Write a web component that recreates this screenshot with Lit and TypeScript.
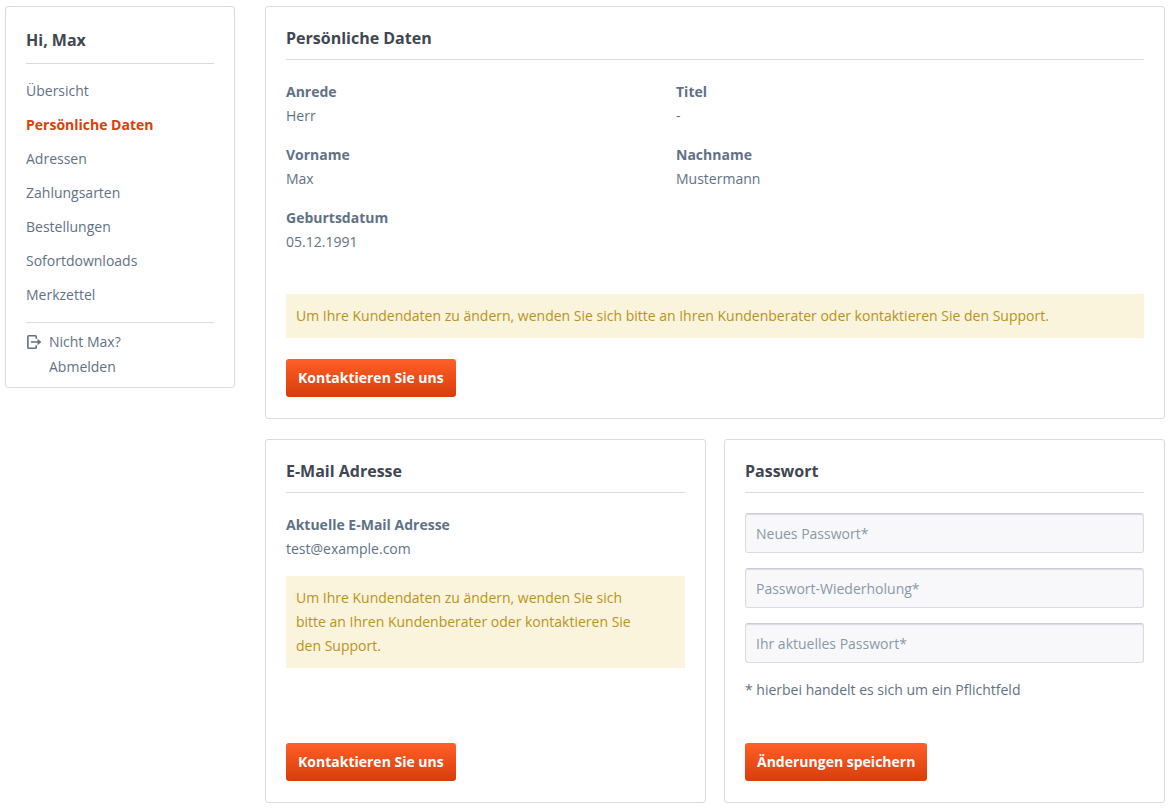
import { LitElement, html, css } from "lit";
import { customElement } from "lit/decorators.js";

interface NavItem {
  label: string;
  active?: boolean;
}

const NAV: NavItem[] = [
  { label: "Übersicht" },
  { label: "Persönliche Daten", active: true },
  { label: "Adressen" },
  { label: "Zahlungsarten" },
  { label: "Bestellungen" },
  { label: "Sofortdownloads" },
  { label: "Merkzettel" },
];

const PERSONAL: [string, string][] = [
  ["Anrede", "Herr"],
  ["Titel", "-"],
  ["Vorname", "Max"],
  ["Nachname", "Mustermann"],
  ["Geburtsdatum", "05.12.1991"],
];

const PASSWORD_FIELDS: [string, string][] = [
  ["new-password", "Neues Passwort*"],
  ["repeat-password", "Passwort-Wiederholung*"],
  ["current-password", "Ihr aktuelles Passwort*"],
];

const NOTICE =
  "Um Ihre Kundendaten zu ändern, wenden Sie sich bitte an Ihren Kundenberater oder kontaktieren Sie den Support.";

@customElement("app-root")
export class AppRoot extends LitElement {
  static styles = css`
    :host {
      display: block;
      font-family: "Open Sans", sans-serif;
      font-size: 14px;
      line-height: 24px;
      color: #5f7285;
      background: #fff;
    }
    *,
    *::before,
    *::after {
      box-sizing: border-box;
    }
    .page {
      display: grid;
      grid-template-columns: 230px minmax(0, 1fr);
      gap: 30px;
      align-items: start;
      padding: 6px 7px 8px 5px;
    }
    .card {
      border: 1px solid #dadae5;
      border-radius: 3px;
      background: #fff;
    }
    .title {
      margin: 0;
      padding-bottom: 9px;
      border-bottom: 1px solid #dadae5;
      font-size: 16px;
      line-height: 24px;
      font-weight: 700;
      color: #3f4752;
    }
    .sidebar {
      padding: 21px 20px 8px;
    }
    .sidebar .title {
      padding-bottom: 11px;
    }
    .nav {
      list-style: none;
      margin: 10px 0;
      padding: 0;
    }
    .link {
      display: block;
      line-height: 34px;
      color: inherit;
      text-decoration: none;
    }
    .active {
      font-weight: 700;
      color: #d9400b;
    }
    .logout {
      display: flex;
      gap: 7px;
      padding-top: 6px;
      border-top: 1px solid #dadae5;
      line-height: 25px;
      color: inherit;
      text-decoration: none;
    }
    .logout-icon {
      flex: none;
      width: 16px;
      height: 25px;
    }
    .logout-text {
      display: flex;
      flex-direction: column;
    }
    .content {
      display: grid;
      gap: 20px;
    }
    .pair {
      display: grid;
      grid-template-columns: repeat(2, minmax(0, 1fr));
      gap: 18px;
    }
    .panel {
      display: flex;
      flex-direction: column;
      padding: 19px 20px 21px;
    }
    .data {
      display: grid;
      grid-template-columns: 5fr 6fr;
      row-gap: 15px;
      margin: 20px 0 0;
    }
    .single {
      grid-template-columns: 1fr;
    }
    .term {
      font-weight: 700;
    }
    .value {
      margin: 0;
    }
    .notice {
      margin: 15px 0 0;
      padding: 10px 40px 10px 10px;
      background: #faf4dc;
      color: #b8931b;
    }
    .notice-wide {
      margin: 40px 0 21px;
    }
    .btn {
      align-self: flex-start;
      height: 38px;
      padding: 0 12px;
      border: 0;
      border-radius: 3px;
      background: linear-gradient(#ff5f27, #d83d0b);
      color: #fff;
      font: inherit;
      font-weight: 700;
      cursor: pointer;
    }
    .bottom {
      margin-top: auto;
    }
    .form {
      display: flex;
      flex-direction: column;
      flex: 1;
      margin: 20px 0 0;
    }
    .fields {
      display: grid;
      gap: 15px;
    }
    .input {
      display: block;
      width: 100%;
      height: 40px;
      padding: 0 10px;
      border: 1px solid #dadae5;
      border-top-color: #cbcbdb;
      border-radius: 3px;
      background: #f8f8fa;
      box-shadow: inset 0 1px 1px #dadae5;
      font: inherit;
      color: #5f7285;
    }
    .input::placeholder {
      color: #8798a9;
      opacity: 1;
    }
    .hint {
      margin: 15px 0 41px;
    }
  `;

  private renderData(rows: [string, string][], extra = "") {
    return html`<dl class="data ${extra}">
      ${rows.map(
        ([term, value]) => html`<div>
          <dt class="term">${term}</dt>
          <dd class="value">${value}</dd>
        </div>`
      )}
    </dl>`;
  }

  render() {
    return html`
      <div class="page">
        <aside class="card sidebar">
          <h2 class="title">Hi, Max</h2>
          <ul class="nav">
            ${NAV.map(
              (item) => html`<li>
                <a class="link ${item.active ? "active" : ""}" href="#">${item.label}</a>
              </li>`
            )}
          </ul>
          <a class="logout" href="#">
            <svg class="logout-icon" viewBox="0 0 16 25" fill="none" aria-hidden="true">
              <path
                d="M10.2 9.8V7.5Q10.2 6.7 9.4 6.7H2.7Q1.9 6.7 1.9 7.5V18.5Q1.9 19.3 2.7 19.3H9.4Q10.2 19.3 10.2 18.5V16.2"
                stroke="#5f7285"
                stroke-width="1.6"
              />
              <path d="M5 12.2H11.5V9.7L15.4 13L11.5 16.3V13.8H5Z" fill="#5f7285" />
            </svg>
            <span class="logout-text"><span>Nicht Max?</span><span>Abmelden</span></span>
          </a>
        </aside>
        <main class="content">
          <section class="card panel">
            <h2 class="title">Persönliche Daten</h2>
            ${this.renderData(PERSONAL)}
            <p class="notice notice-wide">${NOTICE}</p>
            <button class="btn" type="button">Kontaktieren Sie uns</button>
          </section>
          <div class="pair">
            <section class="card panel">
              <h2 class="title">E-Mail Adresse</h2>
              ${this.renderData([["Aktuelle E-Mail Adresse", "test@example.com"]], "single")}
              <p class="notice">${NOTICE}</p>
              <button class="btn bottom" type="button">Kontaktieren Sie uns</button>
            </section>
            <section class="card panel">
              <h2 class="title">Passwort</h2>
              <form class="form">
                <div class="fields">
                  ${PASSWORD_FIELDS.map(
                    ([id, label]) => html`<input
                      class="input"
                      type="password"
                      id=${id}
                      name=${id}
                      placeholder=${label}
                      aria-label=${label}
                      required
                    />`
                  )}
                </div>
                <p class="hint">* hierbei handelt es sich um ein Pflichtfeld</p>
                <button class="btn bottom" type="button">Änderungen speichern</button>
              </form>
            </section>
          </div>
        </main>
      </div>
    `;
  }
}
